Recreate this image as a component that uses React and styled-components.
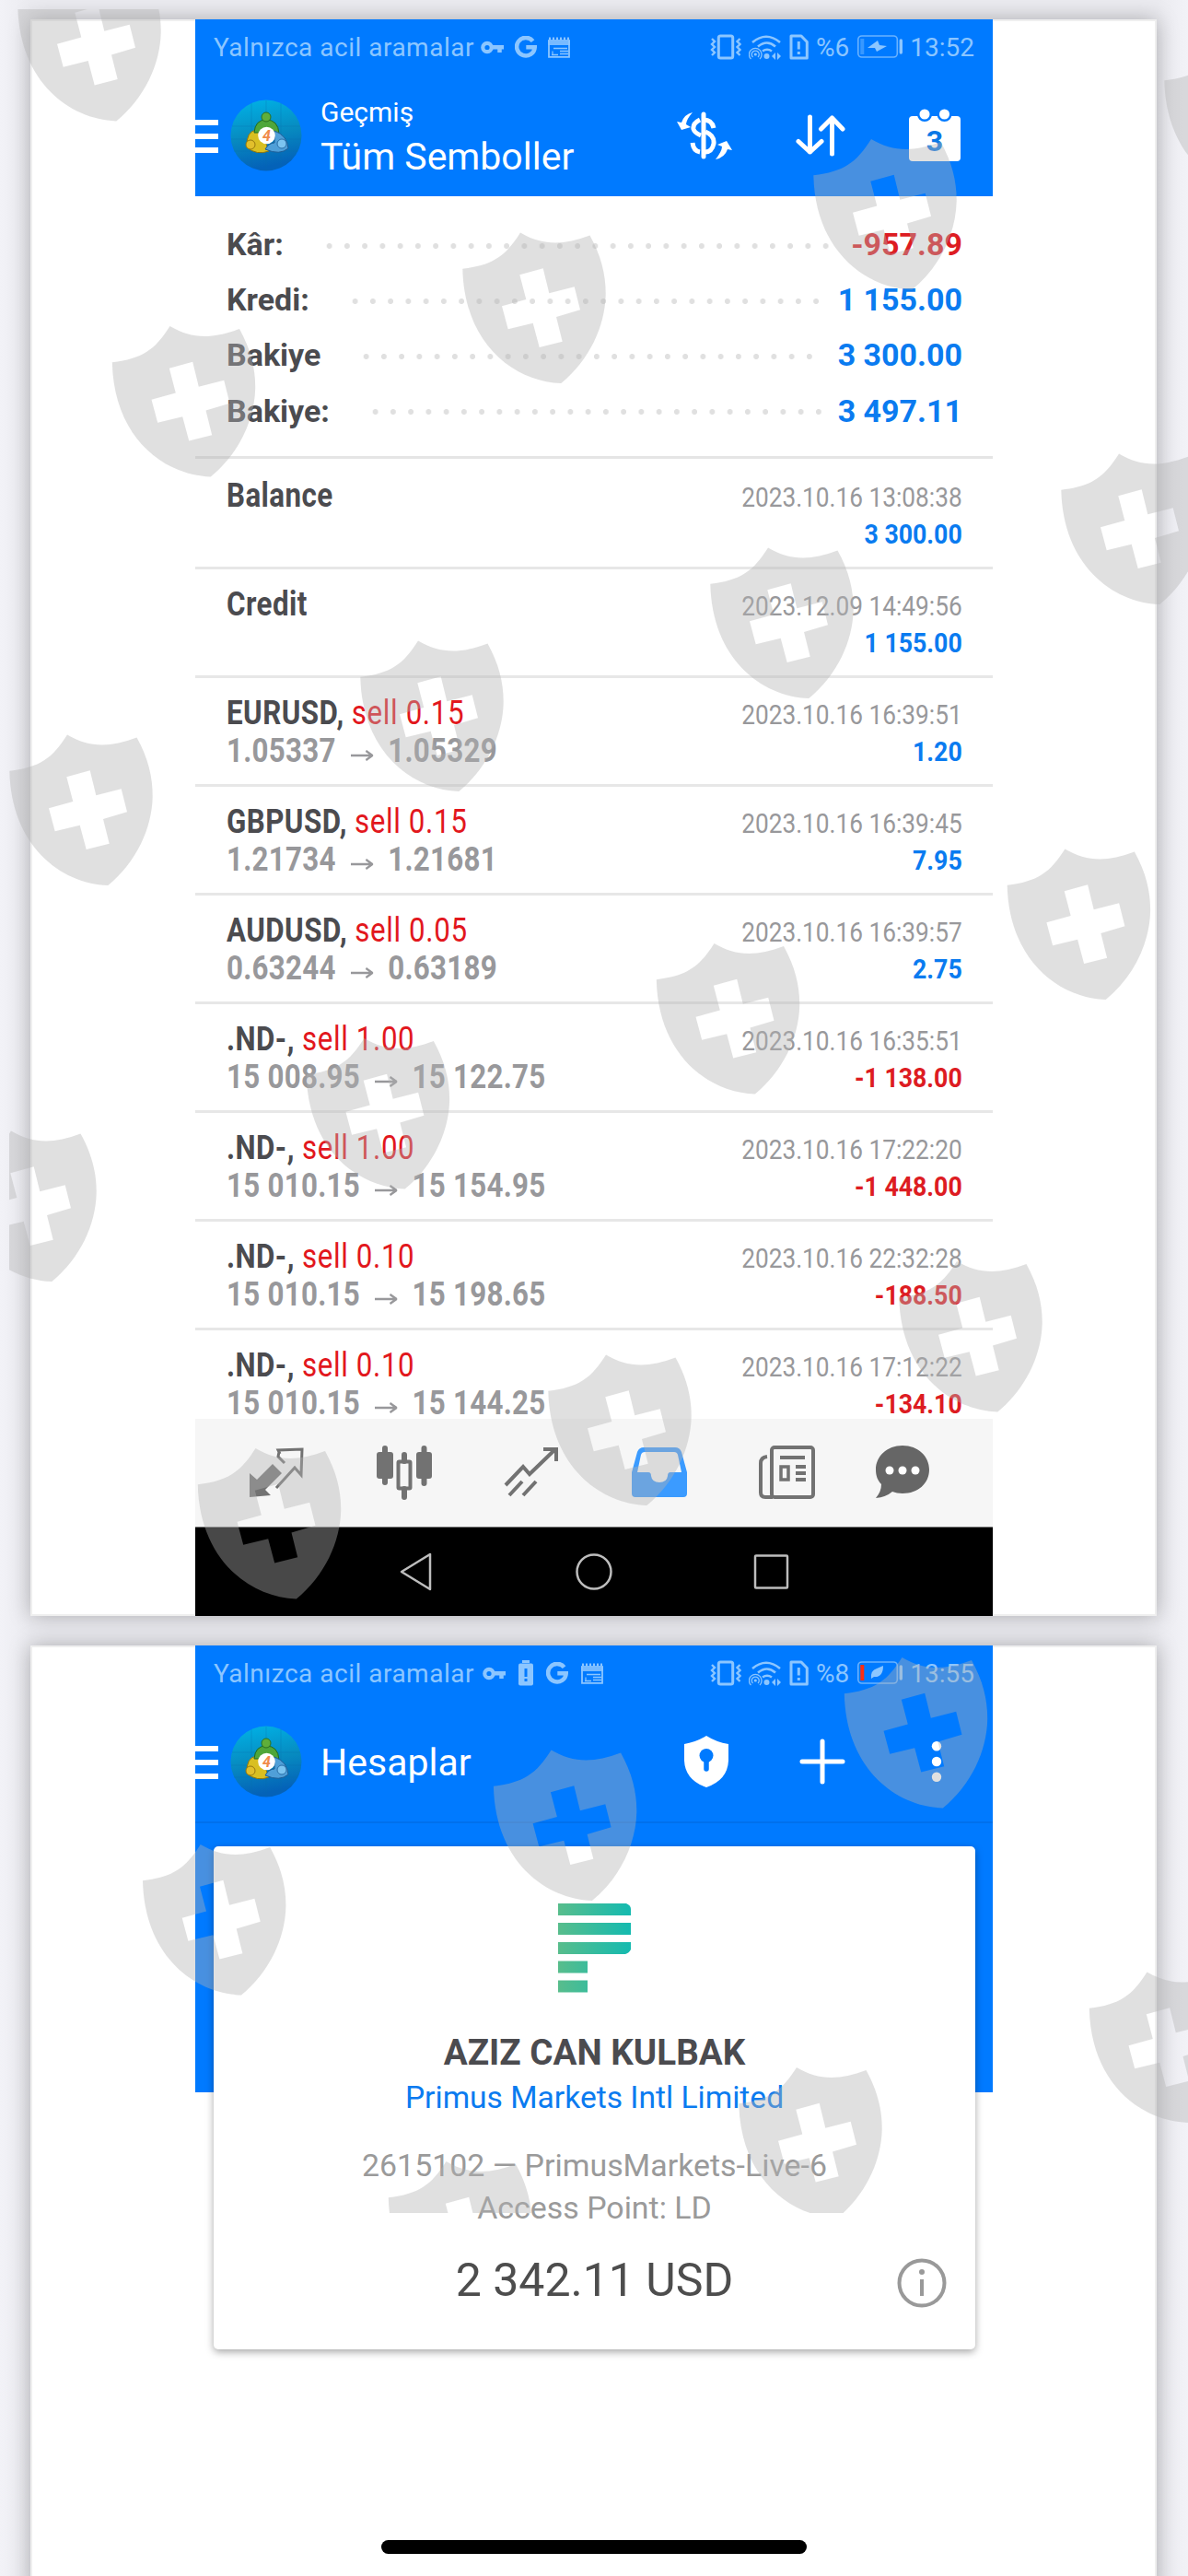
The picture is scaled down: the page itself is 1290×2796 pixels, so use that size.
import React from "react";
import styled, { createGlobalStyle } from "styled-components";

const GlobalStyle = createGlobalStyle`
* { box-sizing: border-box; }
body {
margin: 0;
background: #efeff4;
font-family: Roboto, "Liberation Sans", sans-serif;
}
svg { display: block; flex: none; }
`
const Screen = styled.div`
position: relative;
width: 1290px;
height: 2796px;
overflow: hidden;
padding: 21px 34px 0 33px;
display: flex;
flex-direction: column;
gap: 32px;
background: linear-gradient(90deg, #f2f2f7, #ebebf0 33px, #ebebf0 1257px, #f2f2f7);
`
const Sheet = styled.section`
flex: none;
height: ${(p) => p.$height}px;
padding: 0 177px 0 178px;
background: white;
box-shadow: 0 0 22px rgba(0,0,0,0.28), inset 0 0 0 2px #efefef;
`
const Phone = styled.div`
width: 866px;
height: 100%;
margin-left: 1px;
position: relative;
display: flex;
flex-direction: column;
`
const StatusBar = styled.div`
flex: none;
height: 60px;
padding: 0 20px;
display: flex;
align-items: center;
justify-content: space-between;
background: #007aff;
color: #8cc6ff;
font-size: 28px;
`
const StatusGroup = styled.div`
display: flex;
align-items: center;
gap: ${(p) => p.$gap}px;
white-space: nowrap;
`
const Carrier = styled.span`
letter-spacing: 0.5px;
margin-right: -5px;
`
const AppBar = styled.header`
flex: none;
height: ${(p) => (p.$line ? 133 : 132)}px;
display: flex;
align-items: center;
background: #007aff;
color: white;
padding-right: ${(p) => p.$right}px;
border-bottom: ${(p) => (p.$line ? "2px solid #0070ec" : "none")};
`
const Burger = styled.div`
width: 25px;
height: 36px;
border-top: 6px solid white;
border-bottom: 6px solid white;
display: flex;
align-items: center;
margin: 2px 13px 0 0;
&::after { content: ""; width: 100%; height: 6px; background: white; }
`
const Titles = styled.div`
flex: 1;
margin-left: 20px;
padding-top: 3px;
line-height: 50px;
font-size: 41px;
white-space: nowrap;
`
const Over = styled.div`
margin-bottom: 4px;
font-size: 30px;
line-height: 38px;
`
const Actions = styled.div`
display: flex;
align-items: center;
gap: ${(p) => p.$gap}px;
`
const Summary = styled.div`
flex: none;
height: 285px;
padding: 22px 33px 0 34px;
border-bottom: 3px solid #e5e5e5;
`
const SummaryRow = styled.div`
display: flex;
align-items: center;
height: 60.2px;
font-size: 34px;
font-weight: 700;
color: #4b4b4f;
`
const Label = styled.span`
flex: 0 0 ${(p) => p.$width}px;
`
const Leader = styled.span`
width: ${(p) => p.$dots * 19.25}px;
height: 8px;
margin-top: 3px;
background: radial-gradient(circle, #e0e0e0 2.6px, transparent 3.4px) 0 0 / 19.25px 8px;
`
const Value = styled.span`
margin-left: auto;
color: ${(p) => (p.$loss ? "#dd1c22" : "#0a7bf0")};
`
const Deals = styled.div`
flex: none;
height: 1042px;
`
const Deal = styled.div`
height: ${(p) => (p.$first ? 120 : 118)}px;
padding: ${(p) => (p.$first ? 20 : 18)}px 33px 0 34px;
border-bottom: 3px solid #e7e7e7;
display: flex;
justify-content: space-between;
`
const DealMain = styled.div`
transform: scaleX(0.87);
transform-origin: 0 0;
font-size: 36px;
line-height: 41px;
font-weight: 700;
letter-spacing: 0.5px;
color: #4b4b4f;
white-space: pre;
`
const Side = styled.span`
font-weight: 400;
letter-spacing: 0.7px;
color: #e2171d;
`
const Prices = styled.div`
color: #98989b;
display: flex;
align-items: center;
gap: 18.5px;
letter-spacing: 0.3px;
svg { margin-top: 8px; }
`
const DealMeta = styled.div`
transform: scaleX(0.905);
transform-origin: 100% 0;
padding-top: 2px;
text-align: right;
font-size: 29px;
line-height: 40px;
color: #98989b;
`
const Amount = styled.div`
font-size: 29.5px;
line-height: 41px;
font-weight: 700;
color: ${(p) => (p.$loss ? "#dd1c22" : "#0a7bf0")};
`
const TabBar = styled.nav`
flex: none;
height: 117px;
padding: 0 0 2px 58px;
display: flex;
align-items: center;
gap: 78.5px;
background: #f6f6f6;
svg:last-child { margin-left: -15px; }
`
const NavBar = styled.div`
flex: 1;
display: flex;
align-items: center;
justify-content: center;
gap: 151px;
background: black;
border-top: 1px solid #777;
`
const BlueZone = styled.div`
height: 292px;
padding: 25px 19px 0 20px;
background: #007aff;
`
const Card = styled.div`
position: relative;
height: 546px;
padding-top: 62px;
display: flex;
flex-direction: column;
align-items: center;
background: white;
border-radius: 5px;
box-shadow: 0 3px 8px rgba(0,0,0,0.35);
white-space: nowrap;
`
const Owner = styled.div`
margin-top: 40px;
font-size: 38.6px;
line-height: 50px;
font-weight: 700;
color: #4b4b4f;
`
const Broker = styled.div`
font-size: 33.6px;
line-height: 48px;
color: #0a7bf0;
`
const Server = styled.div`
margin-top: 27px;
font-size: 33.9px;
line-height: 46px;
color: #9a9a9a;
text-align: center;
`
const Total = styled.div`
margin-top: 23px;
font-size: 50px;
line-height: 64px;
color: #4d4d4d;
`
const Info = styled.span`
position: absolute;
right: 31px;
bottom: 45px;
`
const Watermark = styled.svg`
position: absolute;
left: 0;
top: 0;
pointer-events: none;
`
const HomeBar = styled.div`
position: absolute;
left: 414px;
bottom: 24px;
width: 462px;
height: 15px;
border-radius: 8px;
background: black;
`

const summary = [
  { label: "Kâr:", width: 102, dots: 29, value: "-957.89", loss: true },
  { label: "Kredi:", width: 130, dots: 27, value: "1 155.00" },
  { label: "Bakiye", width: 142, dots: 26, value: "3 300.00" },
  { label: "Bakiye:", width: 152, dots: 26, value: "3 497.11" },
]

const deals = [
  { name: "Balance", time: "2023.10.16 13:08:38", amount: "3 300.00" },
  { name: "Credit", time: "2023.12.09 14:49:56", amount: "1 155.00" },
  { name: "EURUSD", side: "sell 0.15", open: "1.05337", close: "1.05329", time: "2023.10.16 16:39:51", amount: "1.20" },
  { name: "GBPUSD", side: "sell 0.15", open: "1.21734", close: "1.21681", time: "2023.10.16 16:39:45", amount: "7.95" },
  { name: "AUDUSD", side: "sell 0.05", open: "0.63244", close: "0.63189", time: "2023.10.16 16:39:57", amount: "2.75" },
  { name: ".ND-", side: "sell 1.00", open: "15 008.95", close: "15 122.75", time: "2023.10.16 16:35:51", amount: "-1 138.00" },
  { name: ".ND-", side: "sell 1.00", open: "15 010.15", close: "15 154.95", time: "2023.10.16 17:22:20", amount: "-1 448.00" },
  { name: ".ND-", side: "sell 0.10", open: "15 010.15", close: "15 198.65", time: "2023.10.16 22:32:28", amount: "-188.50" },
  { name: ".ND-", side: "sell 0.10", open: "15 010.15", close: "15 144.25", time: "2023.10.16 17:12:22", amount: "-134.10" },
]

const shields = [
  [19, -32.6], [1264, 47.5], [883, 150.5], [502, 252], [121.5, 353.5],
  [1152, 492], [771, 594], [391, 695], [10, 797], [1093.4, 921],
  [712.5, 1023.5], [332.4, 1126.5], [-51, 1227], [976, 1368.5], [595, 1470],
  [214.5, 1571.5], [916.5, 1798.5], [535.6, 1899], [154.7, 2001.5],
  [1182.5, 2140], [802, 2243.5], [421.5, 2345.5],
]

const SHIELD = "M63 0.5C86 14 108 15 138.5 3.5C151 26 156 47 155.7 68C155 102 138 139 107.3 164C55 162 2 120 0.3 39.7C33 36 47 26 63 0.5ZM62.3 46.3L87.7 39.3L94.3 66.3L121.7 59.3L128 84.3L102 92L108.7 118.7L83.7 125L76.7 98.7L49.7 105.3L43 80.3L69.3 73Z"

const Key = () => (
  <svg width="25" height="15" viewBox="0 0 25 15" fill="none" stroke="currentColor">
    <circle cx="7" cy="7.5" r="4.7" strokeWidth="4.2" />
    <path d="M12 7.3H25M20.5 7.5V13" strokeWidth="4.5" />
  </svg>
)
const Google = () => (
  <svg width="24" height="25" viewBox="0 0 24 25" fill="none" stroke="currentColor" strokeWidth="4.6">
    <path d="M19.6 5.6A9.8 9.8 0 1 0 21.7 12.3H12.3" />
  </svg>
)
const NewsPage = () => (
  <svg width="24" height="23" viewBox="0 0 24 23" fill="none" stroke="currentColor">
    <path d="M1 4V21.8H23V4" strokeWidth="1.8" />
    <path d="M0 6H24" strokeWidth="6" opacity="0.85" />
    <path d="M1 2H23" strokeWidth="3" strokeDasharray="2 2" />
    <path d="M6 12.5H21M13 15.5H22M13 18.5H22M4 19.5H11" strokeWidth="1.6" />
    <path d="M5 15.500V20" strokeWidth="1.200" />
  </svg>
)
const BatteryAlert = () => (
  <svg width="16" height="28" viewBox="0 0 16 28">
    <path d="M4 0H12V3H4Z" fill="currentColor" />
    <rect y="3.5" width="16" height="24" rx="2" fill="currentColor" />
    <path d="M8 9V18M8 20V23" stroke="#007aff" strokeWidth="3" />
  </svg>
)
const Vibrate = () => (
  <svg width="34" height="28" viewBox="0 0 34 28" fill="none" stroke="currentColor" strokeWidth="2.4">
    <rect x="9.3" y="2" width="15.4" height="24" rx="2" strokeWidth="3" />
    <path d="M2 5L5 8L2 11L5 14L2 17L5 20L2 23M32.5 5L29.5 8L32.5 11L29.5 14L32.5 17L29.5 20L32.5 23" />
  </svg>
)
const Wifi = () => (
  <svg width="35" height="27" viewBox="0 0 35 27" fill="none" stroke="currentColor" strokeWidth="2.6">
    <path d="M4 8Q19 -4.500 34 8M10 12.500Q20 4.500 29 12.500M15 17.500Q20 14 25 17.500" />
    <circle cx="19.500" cy="23" r="3" fill="currentColor" stroke="none" />
    <circle cx="7.300" cy="21" r="1.600" fill="currentColor" stroke="none" />
    <path d="M4.500 24A4 4 0 1 1 10 24M2.500 26A6.800 6.800 0 1 1 12 26" strokeWidth="1.300" />
    <path d="M29 19L25 23L29 27ZM31 19L35 23L31 27Z" fill="currentColor" stroke="none" />
  </svg>
)
const Sim = () => (
  <svg width="21" height="28" viewBox="0 0 21 28" fill="none" stroke="currentColor" strokeWidth="3">
    <path d="M2 2H13L19.300 8.500V26H2Z" strokeLinejoin="round" />
    <path d="M10.300 8V16.500M10.300 19V22" />
  </svg>
)
const Battery = ({ low }) => (
  <svg width="49" height="26" viewBox="0 0 49 26" fill="none" stroke="currentColor">
    <rect x="0.800" y="1" width="42.500" height="23" rx="4" strokeWidth="1.600" opacity="0.75" />
    <path d="M47.300 6V19" strokeWidth="3.400" strokeLinecap="round" />
    <path d="M5.300 4V21" strokeWidth="4" stroke={low ? "#ff2d10" : "currentColor"} opacity={low ? 1 : 0.4} />
    {low
      ? <path d="M15 19Q14 10 21 8L28 5Q28 18 18 17Z" fill="currentColor" stroke="none" />
      : <path d="M11 14L22 6L24 11L32 12L21 18L19 14Z" fill="currentColor" stroke="none" />}
  </svg>
)
const Logo = () => (
  <svg width="78" height="78" viewBox="-39 -39 78 78">
    <defs>
      <linearGradient id="disc" x1="0" y1="0" x2="0.200" y2="1">
        <stop offset="0" stopColor="#00b4e8" />
        <stop offset="0.550" stopColor="#078bc0" />
        <stop offset="1" stopColor="#0462b8" />
      </linearGradient>
    </defs>
    <circle r="38.500" fill="url(#disc)" />
    <path d="M-37 -10H37M-38 4H38M-35 17H35M-16 -35V35M0 -38V38M16 -35V35" stroke="#0a6fae" strokeWidth="0.600" opacity="0.500" />
    <path d="M-21 13Q-22 -5 -10 -6Q-2 2 3 17Q-10 22 -21 13Z" fill="#d9bf22" stroke="#8a7410" />
    <path d="M-13 -3Q-12 -17 0 -17Q13 -17 14 -2Q6 -1 0 -3Z" fill="#4fa63a" stroke="#1f6a22" />
    <path d="M9 -5Q23 0 24 14Q15 22 -1 15Q3 8 9 8Z" fill="#4f9fd8" stroke="#1d5c95" />
    <circle cx="0" cy="-20" r="5" fill="#5fae3a" stroke="#2b7022" />
    <circle cx="-17" cy="10" r="5" fill="#e2bf2c" stroke="#96780f" />
    <circle cx="17" cy="9" r="5" fill="#7cc4f0" stroke="#2a6fa8" />
    <circle cx="0.500" cy="0" r="9.300" fill="#fff" />
    <text x="0.500" y="6" textAnchor="middle" fontSize="16" fontWeight="700" fontStyle="italic" fill="#f08a4a">4</text>
  </svg>
)
const Dollar = () => (
  <svg width="60" height="52" viewBox="0 0 60 52" fill="none" stroke="white" strokeWidth="5">
    <path d="M29 3V49" strokeLinecap="round" />
    <path d="M40 18Q38 9 29 9M25 9Q17 13 18 19Q19 23 26 26M31 22Q41 26 40 35Q38 44 31 44M25 44Q18 43 17 34" />
    <path d="M17 1Q10 9 10 14L15 17L5 20L0 11L5 12Q8 3 17 1ZM42 52Q49 43 49 38L44 36L54 32L60 42L55 41Q52 50 42 52Z" fill="white" stroke="none" />
  </svg>
)
const Sort = () => (
  <svg width="54" height="46" viewBox="0 0 54 46" fill="none" stroke="white" strokeWidth="5" strokeLinecap="round" strokeLinejoin="round">
    <path d="M15.500 3V41M3 29.500L15.500 41L28 29.500M39.500 43V4M27.500 16L39.500 4L51 16" />
  </svg>
)
const Calendar = () => (
  <svg width="56" height="58" viewBox="0 0 56 58">
    <rect y="8" width="56" height="49" rx="4" fill="white" />
    <g fill="white" stroke="#007aff" strokeWidth="2.500">
      <circle cx="17" cy="6" r="6.800" />
      <circle cx="38.500" cy="6" r="6.800" />
    </g>
    <text x="28" y="46" textAnchor="middle" fontSize="32" fontWeight="700" fill="#0a78e6">3</text>
  </svg>
)
const Lock = () => (
  <svg width="50" height="56" viewBox="0 0 50 56">
    <path d="M25 0Q36 7 49 9V27Q48 48 25 56Q2 48 1 27V9Q14 7 25 0Z" fill="white" />
    <circle cx="25" cy="21.500" r="7.500" fill="#007aff" />
    <path d="M25 22V36" stroke="#007aff" strokeWidth="5.500" strokeLinecap="round" />
  </svg>
)
const Plus = () => (
  <svg width="50" height="50" viewBox="0 0 50 50" stroke="white" strokeWidth="5" strokeLinecap="round">
    <path d="M3 25H47M25 3V47" />
  </svg>
)
const MoreDots = styled.svg`
margin-left: 17px;
`
const Arrow = () => (
  <svg width="28" height="12" viewBox="0 0 28 12" fill="none" stroke="#98989b" strokeWidth="2.600">
    <path d="M0 6H26M19 1L27 6L19 11" />
  </svg>
)

const Tabs = () => (
  <TabBar>
    <svg width="60" height="60" viewBox="0 0 60 60" fill="#727272">
      <path d="M1 31L9 38L26 21L36 31L18 49L24 55L1 57Z" />
      <path d="M34 10L32 6L58 5L57 33L50 25L30 47M39 20L32 13L33 8" fill="none" stroke="#727272" strokeWidth="3" />
    </svg>
    <svg width="60" height="60" viewBox="0 0 60 60" fill="#727272">
      <rect x="0" y="8" width="18" height="29" rx="3" /><rect x="6" y="1" width="6" height="43" rx="3" />
      <rect x="43" y="8" width="17" height="29" rx="3" /><rect x="48.500" y="1" width="6" height="44" rx="3" />
      <path d="M30 11V18M30 48V57" stroke="#727272" strokeWidth="6" strokeLinecap="round" />
      <rect x="23.500" y="18.500" width="13" height="29" rx="1" fill="none" stroke="#727272" strokeWidth="4" />
    </svg>
    <svg width="60" height="60" viewBox="0 0 60 60" fill="none" stroke="#727272" strokeWidth="4">
      <path d="M2 44L21 24L28 32L55 6M43 5H57V18M6 55L20 40M21 55L35 40" />
    </svg>
    <svg width="60" height="60" viewBox="0 0 60 60" fill="#3b9bff">
      <path d="M13 3H47Q52 3 54 8L60 30V53Q60 57 56 57H4Q0 57 0 53V30L6 8Q8 3 13 3ZM14 8Q11 8 10 11L6 30H18Q21 30 21 34Q22 41 30 41Q38 41 39 34Q39 30 42 30H54L50 11Q49 8 46 8Z" fillRule="evenodd" />
    </svg>
    <svg width="62" height="60" viewBox="0 0 62 60" fill="none" stroke="#727272" strokeWidth="4">
      <rect x="14" y="3" width="45" height="54" rx="3" />
      <path d="M9 13Q2 14 2 20V52Q2 57 7 57H15M23 14H50M40 24H51M40 31H51M40 38H51" />
      <rect x="24" y="24" width="8" height="14" strokeWidth="3.500" />
    </svg>
    <svg width="60" height="60" viewBox="0 0 60 60" fill="#666">
      <path d="M30 1C47 1 59 13 59 27C59 42 47 53 30 53C26 53 22 52 19 51Q12 57 1 58Q7 51 7 43C3 39 1 34 1 27C1 13 13 1 30 1Z" />
      <g fill="white"><circle cx="16" cy="28" r="4.500" /><circle cx="30" cy="28" r="4.500" /><circle cx="44" cy="28" r="4.500" /></g>
    </svg>
  </TabBar>
)

const SystemNav = () => (
  <NavBar>
    <svg width="42" height="42" viewBox="0 0 42 42" fill="none" stroke="#bdbdbd" strokeWidth="2.500" strokeLinejoin="round">
      <path d="M36 2V40L5 21Z" />
    </svg>
    <svg width="42" height="42" viewBox="0 0 42 42" fill="none" stroke="#bdbdbd" strokeWidth="2.500">
      <circle cx="21" cy="21" r="18.500" />
    </svg>
    <svg width="42" height="42" viewBox="0 0 42 42" fill="none" stroke="#bdbdbd" strokeWidth="2.500">
      <rect x="3" y="3.500" width="35" height="35" rx="1" />
    </svg>
  </NavBar>
)

const Status = ({ percent, time, low }) => (
  <StatusBar>
    <StatusGroup $gap={low ? 14 : 12}>
      <Carrier>Yalnızca acil aramalar</Carrier>
      <Key />
      {low && <BatteryAlert />}
      <Google />
      <NewsPage />
    </StatusGroup>
    <StatusGroup $gap={8.5}>
      <Vibrate />
      <Wifi />
      <Sim />
      <span>{percent}</span>
      <Battery low={low} />
      <span>{time}</span>
    </StatusGroup>
  </StatusBar>
)

class History extends React.Component {
  render() {
    return (<>
      <Status percent="%6" time="13:52" />
      <AppBar $right={35}>
        <Burger />
        <Logo />
        <Titles>
          <Over>Geçmiş</Over>
          Tüm Semboller
        </Titles>
        <Actions $gap={69}>
          <Dollar />
          <Sort />
          <Calendar />
        </Actions>
      </AppBar>
      <Summary>
        {summary.map((s) => (
          <SummaryRow key={s.label}>
            <Label $width={s.width}>{s.label}</Label>
            <Leader $dots={s.dots} />
            <Value $loss={s.loss}>{s.value}</Value>
          </SummaryRow>
        ))}
      </Summary>
      <Deals>
        {deals.map((d, i) => (
          <Deal key={i} $first={i === 0}>
            <DealMain>
              {d.name}{d.side && ", "}<Side>{d.side}</Side>
              {d.open && <Prices>{d.open}<Arrow />{d.close}</Prices>}
            </DealMain>
            <DealMeta>
              {d.time}
              <Amount $loss={d.amount.startsWith("-")}>{d.amount}</Amount>
            </DealMeta>
          </Deal>
        ))}
      </Deals>
      <Tabs />
      <SystemNav />
    </>)
  }
}

class Accounts extends React.Component {
  render() {
    return (<>
      <Status percent="%8" time="13:55" low />
      <AppBar $line $right={55}>
        <Burger />
        <Logo />
        <Titles>Hesaplar</Titles>
        <Actions $gap={76}>
          <Lock />
          <Plus />
          <MoreDots width="12" height="46" viewBox="0 0 12 46" fill="white">
            <circle cx="6" cy="6.300" r="5.200" /><circle cx="6" cy="23" r="5.200" /><circle cx="6" cy="39.700" r="5.200" />
          </MoreDots>
        </Actions>
      </AppBar>
      <BlueZone>
        <Card>
          <svg width="79" height="97" viewBox="0 0 79 97">
            <defs>
              <linearGradient id="bars" gradientUnits="userSpaceOnUse" x1="0" y1="0" x2="79" y2="0">
                <stop offset="0" stopColor="#58bd8c" />
                <stop offset="1" stopColor="#14bab0" />
              </linearGradient>
            </defs>
            <path d="M0 0H74Q79 2 79 6V13H0ZM0 21H79V34H0ZM0 42H79V50Q77 54 73 55H0ZM0 62.500H32V75.500H0ZM0 83.500H32V96.500H0Z" fill="url(#bars)" />
          </svg>
          <Owner>AZIZ CAN KULBAK</Owner>
          <Broker>Primus Markets Intl Limited</Broker>
          <Server>
            2615102 — PrimusMarkets-Live-6<br />
            Access Point: LD
          </Server>
          <Total>2 342.11 USD</Total>
          <Info>
            <svg width="54" height="54" viewBox="0 0 54 54" fill="none" stroke="#999" strokeWidth="4">
              <circle cx="27" cy="27" r="24.500" />
              <path d="M27 23V41" />
              <circle cx="27" cy="15" r="3" fill="#999" stroke="none" />
            </svg>
          </Info>
        </Card>
      </BlueZone>
    </>)
  }
}

const Shields = () => (
  <Watermark width="1290" height="2796" viewBox="0 0 1290 2796">
    <clipPath id="area"><rect x="10" y="10" width="1280" height="2392" /></clipPath>
    <g clipPath="url(#area)" fill="#b2b2b2" fillOpacity="0.404" fillRule="evenodd">
      {shields.map(([x, y]) => (
        <path key={`${x},${y}`} d={SHIELD} transform={`translate(${x} ${y})`} />
      ))}
    </g>
  </Watermark>
)

const App = () => (
  <Screen>
    <GlobalStyle />
    <Sheet $height={1733}><Phone><History /></Phone></Sheet>
    <Sheet $height={1030}><Phone><Accounts /></Phone></Sheet>
    <Shields />
    <HomeBar />
  </Screen>
)

export default App;
